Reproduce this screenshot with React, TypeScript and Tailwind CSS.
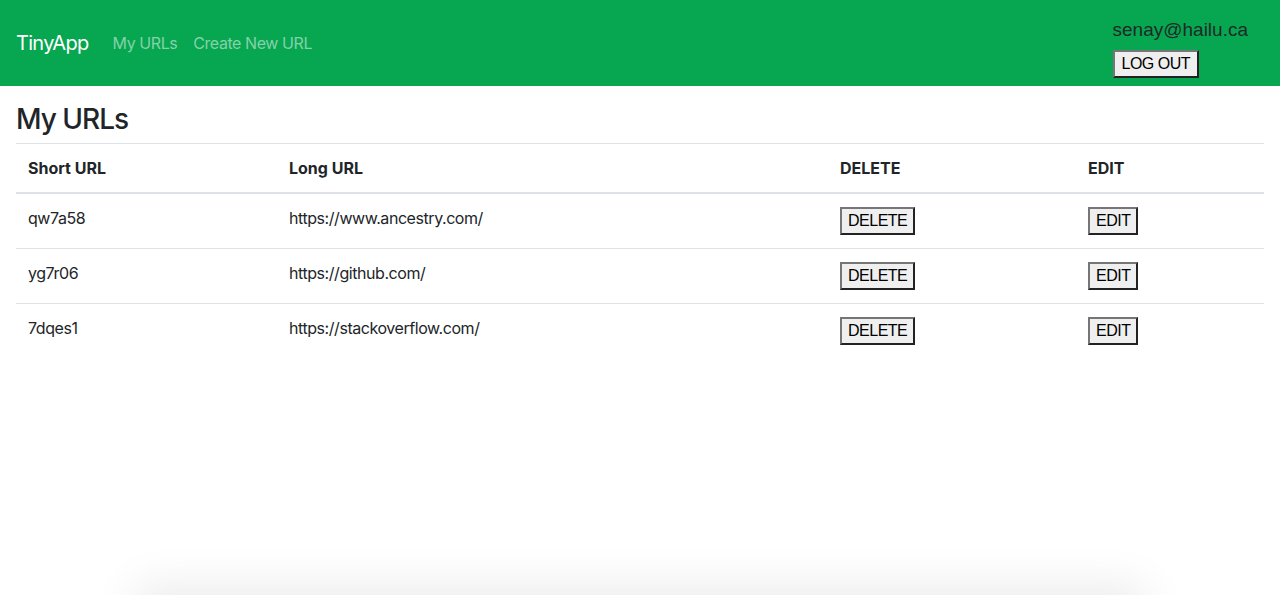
import React from "react";

const rows = [
  { short: "qw7a58", long: "https://www.ancestry.com/" },
  { short: "yg7r06", long: "https://github.com/" },
  { short: "7dqes1", long: "https://stackoverflow.com/" },
];

const btn =
  "h-[28px] px-[6px] bg-[#efefef] text-black text-[16px] tracking-[-0.5px] leading-none border-2 border-t-[#767676] border-l-[#767676] border-b-[#222] border-r-[#222] [font-family:'Liberation_Sans',Arial,sans-serif]";

const cols = "grid grid-cols-[261px_551px_248px_188px]";

export default function App() {
  return (
    <div className="relative w-[1280px] h-[595px] overflow-hidden bg-white text-[#212529] [font-family:Inter,'Liberation_Sans',sans-serif]">
      <nav className="h-[86px] bg-[#07a651] flex items-center justify-between pl-4 pr-[32px]">
        <div className="flex items-center tracking-[-0.43px]">
          <span className="text-white text-[20px] tracking-[-0.7px] mr-[24px]">TinyApp</span>
          <a className="text-[16px] text-[#83d2a8] mr-[16px]">My URLs</a>
          <a className="text-[16px] text-[#83d2a8]">Create New URL</a>
        </div>
        <div className="flex flex-col items-start pt-[9px]">
          <span className="text-[19px] leading-[24px] text-[#1f2a26] [font-family:'Liberation_Sans',Arial,sans-serif]">
            senay@hailu.ca
          </span>
          <button className={`${btn} mt-[8px] px-[7px]`}>LOG OUT</button>
        </div>
      </nav>
      <main className="px-4 pt-[16px]">
        <h3 className="text-[28px] leading-[34px] font-medium tracking-[-1px] mb-[7px]">My URLs</h3>
        <div className="text-[16px]">
          <div className={`${cols} border-t border-[#dee2e6] border-b-2 font-bold`}>
            <div className="px-3 py-3 leading-6">Short URL</div>
            <div className="px-3 py-3 leading-6">Long URL</div>
            <div className="px-3 py-3 leading-6">DELETE</div>
            <div className="px-3 py-3 leading-6">EDIT</div>
          </div>
          {rows.map((r) => (
            <div key={r.short} className={`${cols} h-[55px] border-b border-[#dee2e6] last:border-b-0 tracking-[-0.44px]`}>
              <div className="px-3 pt-[12px] leading-6">{r.short}</div>
              <div className="px-3 pt-[12px] leading-6">{r.long}</div>
              <div className="px-3 pt-[13px]">
                <button className={btn}>DELETE</button>
              </div>
              <div className="px-3 pt-[13px]">
                <button className={btn}>EDIT</button>
              </div>
            </div>
          ))}
        </div>
      </main>
      <div className="absolute left-[150px] right-[150px] top-[600px] h-[40px] shadow-[0_0_45px_15px_rgba(0,0,0,0.08)]" />
    </div>
  );
}
